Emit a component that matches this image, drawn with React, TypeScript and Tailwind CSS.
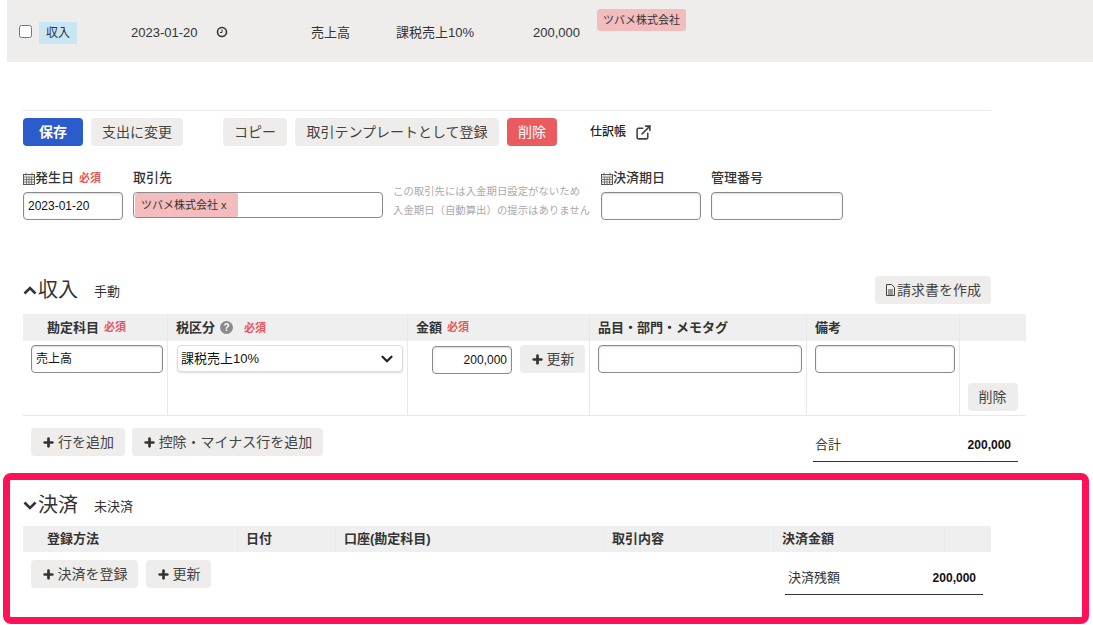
import { ChevronDown, ExternalLink, Plus } from "lucide-react";
import type { ReactNode } from "react";

const grayBtn = "flex h-7 items-center justify-center rounded-[4px] bg-[#eeedeb] text-[14px] text-[#444]";
const input = "h-7 rounded-[4px] border border-[#8a8a8a] bg-white px-1 text-[12px] text-[#111] shadow-[inset_0_1px_2px_rgba(0,0,0,0.15)] outline-none";
const headCell = "flex h-full items-center border-r border-[#e9e9e9] text-[13px] font-bold text-[#333]";
const formLabel = "flex h-6 items-center pb-1 text-[13px] font-medium";

function Required() {
  return <span className="text-[11px] font-bold text-[#e8565c]">必須</span>;
}

function Calendar() {
  return (
    <svg width="12" height="13" viewBox="0 0 12 13" className="shrink-0">
      <rect x="0.5" y="2.5" width="11" height="10" fill="#f4efe6" stroke="#555" />
      <path d="M3 0.5v3M9 0.5v3M0 5h12M0 7.5h12M0 10h12M3.5 5v8M6 5v8M8.5 5v8" stroke="#666" strokeWidth="0.8" />
    </svg>
  );
}

function AddButton({ className, children }: { className: string; children: ReactNode }) {
  return (
    <button type="button" className={`${grayBtn} gap-[3px] ${className}`}>
      <Plus size={13} strokeWidth={5} className="text-[#333]" />
      {children}
    </button>
  );
}

function Chevron({ up }: { up?: boolean }) {
  return (
    <svg width="15" height="9" viewBox="0 0 15 9" className="shrink-0">
      <path d={up ? "M1.5 7.5L7 2l5.5 5.5" : "M1.5 1.5L7 7l5.5-5.5"} fill="none" stroke="#333" strokeWidth="2.6" />
    </svg>
  );
}

export default function App() {
  return (
    <div className="h-[625px] w-[1093px] overflow-hidden bg-white font-['Liberation_Sans','Noto_Sans_CJK_JP',sans-serif] text-[12px] text-[#333]">
      {/* 取引の行 */}
      <div className="ml-[7px] flex h-[62px] items-start bg-[#eeedeb] text-[13px]">
        <input type="checkbox" className="ml-3 mt-[25px] h-[13px] w-[13px]" />
        <span className="ml-[7px] mt-[22px] flex h-[22px] w-[38px] items-center justify-center bg-[#c8e6f4] text-[12px]">収入</span>
        <span className="ml-[54px] mt-[23px] w-[85px]">2023-01-20</span>
        <svg width="12" height="12" viewBox="0 0 12 12" className="mt-[26px]">
          <circle cx="6" cy="6" r="4.5" fill="none" stroke="#333" strokeWidth="1.6" />
          <path d="M6 3.5V6.5H4" fill="none" stroke="#333" strokeWidth="1" />
        </svg>
        <span className="ml-[83px] mt-[23px] w-[85px]">売上高</span>
        <span className="mt-[23px] w-[137px]">課税売上10%</span>
        <span className="mt-[23px] w-[64px]">200,000</span>
        <span className="mt-[9px] flex h-[22px] w-[89px] items-center justify-center rounded-[3px] bg-[#f3bcbd] text-[11px]">ツバメ株式会社</span>
      </div>

      <div className="ml-[23px] mt-12 w-[968px] border-t border-[#eaeaea] pt-[7px]">
        <div className="flex items-center">
          <button type="button" className="flex h-7 w-[60px] items-center justify-center rounded-[4px] bg-[#2a5ccb] text-[14px] font-bold text-white">保存</button>
          <button type="button" className={`${grayBtn} ml-2 w-[92px]`}>支出に変更</button>
          <button type="button" className={`${grayBtn} ml-10 w-16`}>コピー</button>
          <button type="button" className={`${grayBtn} ml-2 w-[204px]`}>取引テンプレートとして登録</button>
          <button type="button" className="ml-2 flex h-7 w-[50px] items-center justify-center rounded-[4px] bg-[#e95b5f] text-[14px] text-white">削除</button>
          <span className="ml-[33px] text-[12px] font-medium text-[#222]">仕訳帳</span>
          <ExternalLink size={17} strokeWidth={2.25} className="ml-[9px] text-[#444]" />
        </div>

        {/* 基本情報 */}
        <div className="mt-[22px] flex h-[54px] items-start">
          <div className="w-[110px]">
            <div className={formLabel}>
              <Calendar />発生日
              <span className="ml-[5px]"><Required /></span>
            </div>
            <input readOnly value="2023-01-20" className={`${input} w-[100px]`} />
          </div>
          <div className="w-[260px]">
            <div className={formLabel}>取引先</div>
            <div className="flex h-[26px] w-[250px] items-center rounded-[4px] border border-[#8a8a8a] bg-white px-px">
              <span className="flex h-6 w-[103px] items-center rounded-[2px] bg-[#f3bcbd] pl-[6px] text-[11px]">ツバメ株式会社 x</span>
            </div>
          </div>
          <div className="mt-[14px] w-[208px] text-[10.4px] leading-[19px] text-[#aaa]">
            <div>この取引先には入金期日設定がないため</div>
            <div>入金期日（自動算出）の提示はありません</div>
          </div>
          <div className="w-[110px]">
            <div className={formLabel}><Calendar />決済期日</div>
            <input readOnly className={`${input} w-[100px]`} />
          </div>
          <div>
            <div className={formLabel}>管理番号</div>
            <input readOnly className={`${input} w-[132px]`} />
          </div>
        </div>
      </div>

      {/* 収入 */}
      <div className="ml-[23px] mt-[54px] flex h-7 w-[968px] items-center">
        <Chevron up />
        <span className="text-[20px] text-[#333]">収入</span>
        <span className="ml-[16px] mt-1 text-[13px]">手動</span>
        <button type="button" className={`${grayBtn} ml-auto w-[116px] gap-px`}>
          <svg width="11" height="12" viewBox="0 0 11 12">
            <path d="M1.5.5h5l3 3v8h-8zM3 6h5M3 8h5M3 10h5" fill="none" stroke="#444" />
          </svg>
          請求書を作成
        </button>
      </div>

      <div className="ml-[23px] mt-[10px] w-[1003px]">
        <div className="flex h-[27px] bg-[#efefef]">
          <div className={`${headCell} w-[145px] gap-[5px] pl-6`}>勘定科目<Required /></div>
          <div className={`${headCell} w-[240px] pl-2`}>
            税区分
            <span className="ml-[5px] flex h-[13px] w-[13px] items-center justify-center rounded-full bg-[#8a8a8a] text-[10px] font-bold text-white">?</span>
            <span className="ml-[11px]"><Required /></span>
          </div>
          <div className={`${headCell} w-[182px] gap-[5px] pl-2`}>金額<Required /></div>
          <div className={`${headCell} w-[217px] pl-2`}>品目・部門・メモタグ</div>
          <div className={`${headCell} w-[153px] pl-2`}>備考</div>
          <div className="w-[66px]" />
        </div>
        <div className="flex h-[75px] border-b border-[#e9e9e9]">
          <div className="w-[145px] border-r border-[#e9e9e9] pl-2 pt-1">
            <input readOnly value="売上高" className={`${input} w-[132px] pb-[3px]`} />
          </div>
          <div className="w-[240px] border-r border-[#e9e9e9] pl-[9px] pt-1">
            <div className="flex h-[27px] w-[226px] items-center justify-between rounded-[4px] border border-[#ddd] bg-white pl-[3px] pr-[6px] text-[13px] text-[#111] shadow-[0_1px_2px_rgba(0,0,0,0.15)]">
              課税売上10%
              <ChevronDown size={18} strokeWidth={3} className="text-[#222]" />
            </div>
          </div>
          <div className="flex w-[182px] items-start gap-2 border-r border-[#e9e9e9] pl-6 pt-[5px]">
            <input readOnly value="200,000" className={`${input} w-[80px] text-right`} />
            <AddButton className="-mt-px w-[65px]">更新</AddButton>
          </div>
          <div className="w-[217px] border-r border-[#e9e9e9] pl-2 pt-1">
            <input readOnly className={`${input} w-[204px]`} />
          </div>
          <div className="w-[153px] border-r border-[#e9e9e9] pl-2 pt-1">
            <input readOnly className={`${input} w-[140px]`} />
          </div>
          <div className="flex w-[66px] items-end justify-center pb-[4px]">
            <button type="button" className={`${grayBtn} ml-[-1px] w-[50px]`}>削除</button>
          </div>
        </div>
        <div className="flex h-[56px] items-start pl-2 pt-3">
          <AddButton className="w-[94px]">行を追加</AddButton>
          <AddButton className="ml-[7px] w-[191px]">控除・マイナス行を追加</AddButton>
          <div className="ml-[490px] flex h-[34px] w-[205px] items-center justify-between border-b border-[#333] pl-[2px] pr-[7px] text-[13px]">
            <span>合計</span>
            <span className="text-[12px] font-bold text-[#111]">200,000</span>
          </div>
        </div>
      </div>

      {/* 決済 */}
      <div className="ml-[3px] mt-[1px] h-[151px] w-[1086px] rounded-[8px] border-[7px] border-[#ff1159] bg-white pl-[13px] pt-[13px]">
        <div className="flex h-[24px] items-center">
          <Chevron />
          <span className="text-[20px]">決済</span>
          <span className="ml-[16px] mt-[4px] text-[13px]">未決済</span>
        </div>
        <div className="mt-[9px] flex h-[26px] w-[968px] bg-[#efefef] text-[13px] font-bold text-[#333]">
          <div className="flex w-[215px] items-center border-r border-[#ebebeb] pl-6">登録方法</div>
          <div className="flex w-[98px] items-center border-r border-[#ebebeb] pl-2">日付</div>
          <div className="flex w-[268px] items-center border-r border-[#ebebeb] pl-2">口座(勘定科目)</div>
          <div className="flex w-[170px] items-center border-r border-[#ebebeb] pl-2">取引内容</div>
          <div className="flex w-[171px] items-center border-r border-[#ebebeb] pl-2">決済金額</div>
          <div className="flex-1" />
        </div>
        <div className="flex items-start pl-2 pt-2">
          <AddButton className="w-[107px]">決済を登録</AddButton>
          <AddButton className="ml-2 w-[65px]">更新</AddButton>
          <div className="ml-[574px] mt-[1px] flex h-[34px] w-[198px] items-center justify-between border-b border-[#333] pl-[3px] pr-[7px] text-[13px]">
            <span>決済残額</span>
            <span className="text-[12px] font-bold text-[#111]">200,000</span>
          </div>
        </div>
      </div>
    </div>
  );
}
